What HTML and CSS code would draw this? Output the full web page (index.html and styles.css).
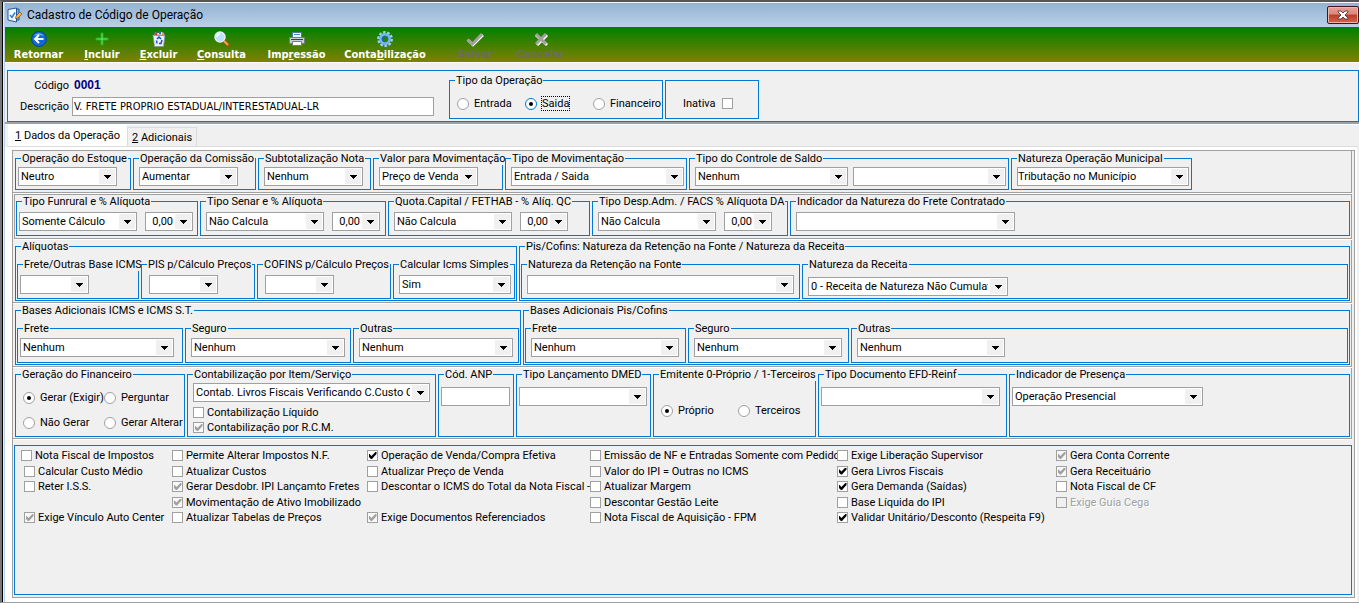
FILE: index.html
```html
<!DOCTYPE html>
<html lang="pt-BR">
<head>
<meta charset="utf-8">
<title>Cadastro de Código de Operação</title>
<link rel="stylesheet" href="styles.css">
</head>
<body>
<div class="window">
  <header class="titlebar">
    <svg class="app-icon" width="16" height="16" viewBox="0 0 16 16">
      <path d="M1 2.500 9.500 1v14L1 13z" fill="#f4f9ff" stroke="#24579a"/>
      <path d="M10 2h2v11h-2" fill="#7eb2ea" stroke="#24579a"/>
      <path d="M3 8l2 2.500L8 5.500" fill="none" stroke="#2f7fd4" stroke-width="1.500"/>
      <path d="M9 9l4-4 2 2-4 4-2.500.5z" fill="#f2b74d" stroke="#7a4c18" stroke-width=".7"/>
    </svg>
    <h1>Cadastro de Código de Operação</h1>
    <button class="close" type="button" aria-label="Fechar">
      <svg width="12" height="10" viewBox="0 0 12 10"><path d="M1 1h3l2 2 2-2h3v1L8 5l3 3v1H8L6 7 4 9H1V8l3-3-3-3z" fill="#fff" stroke="#4b3b4b" stroke-width=".9"/></svg>
    </button>
  </header>

  <nav class="toolbar">
    <button type="button">
      <svg width="16" height="16" viewBox="0 0 16 16"><circle cx="8" cy="8" r="7.500" fill="#1266d6" stroke="#0a3f9a"/><path d="M3 5a6 6 0 0 1 10 0c-3-1.500-7-1.500-10 0z" fill="#6eb0f8"/><path d="M8 4 4 8l4 4M4.500 8H12.500" fill="none" stroke="#fff" stroke-width="2"/></svg>
      <span>Retornar</span></button>
    <button type="button">
      <svg width="16" height="16" viewBox="0 0 16 16"><path d="M7 2h2v5h5v2H9v5H7V9H2V7h5z" fill="#5fe05a" stroke="#22b022" stroke-width="1"/></svg>
      <span><u>I</u>ncluir</span></button>
    <button type="button">
      <svg width="16" height="16" viewBox="0 0 16 16"><path d="M2 4h12l-1.500 11.500h-9z" fill="#edf1f8" stroke="#8993a8" stroke-width=".8"/><path d="M3 4l1-3 3 1 2-1.500 4 1L14 4z" fill="#fff" stroke="#444" stroke-width=".7"/><path d="M4 2h2v2H4z" fill="#d34"/><path d="M8 1h2v2H8z" fill="#27b"/><path d="M11 2h2v2h-2z" fill="#e9a526"/><path d="M6 8l2-2 2 2M11 9l-1 3.500H8M5.500 9.500 6 12.500" fill="none" stroke="#1d4fc4" stroke-width="1.500"/></svg>
      <span><u>E</u>xcluir</span></button>
    <button type="button">
      <svg width="16" height="16" viewBox="0 0 16 16"><path d="M10 10l4.500 4.500" stroke="#9a5217" stroke-width="3.500" stroke-linecap="round"/><path d="M10 10l4 4" stroke="#f4a747" stroke-width="2"/><circle cx="6" cy="6" r="5" fill="#b9e1fb" stroke="#e6edf5" stroke-width="1.500"/><path d="M3 6a3 3 0 0 1 3-3" fill="none" stroke="#fff" stroke-width="1.500"/></svg>
      <span><u>C</u>onsulta</span></button>
    <button type="button">
      <svg width="16" height="16" viewBox="0 0 16 16"><path d="M3.500 1.500h9v5h-9z" fill="#eaf3fd" stroke="#54779f"/><path d="M5 3.500h6" stroke="#4a90d9"/><path d="M.5 6.500h15v6H.500z" fill="#c9ced6" stroke="#747c88"/><path d="M2 8.500h12" stroke="#38404c"/><path d="M3.500 10.500h9v4h-9z" fill="#fff" stroke="#747c88"/></svg>
      <span>Imp<u>r</u>essão</span></button>
    <button type="button">
      <svg width="16" height="16" viewBox="0 0 16 16"><circle cx="8" cy="8" r="6.700" fill="none" stroke="#9bd2fa" stroke-width="2.400" stroke-dasharray="2.600 1.600"/><circle cx="8" cy="8" r="4.500" fill="none" stroke="#73b7f2" stroke-width="3"/><circle cx="8" cy="8" r="3" fill="none" stroke="#1e64b8"/></svg>
      <span>Conta<u>b</u>ilização</span></button>
    <button type="button" disabled>
      <svg width="18" height="16" viewBox="0 0 18 16"><path d="M2 9l5 5L17 4" fill="none" stroke="#fff" stroke-width="2.500"/><path d="M1.500 8.500 6.500 13 16 3" fill="none" stroke="#a0a0a0" stroke-width="3"/></svg>
      <span><u>S</u>alvar</span></button>
    <button type="button" disabled>
      <svg width="16" height="16" viewBox="0 0 16 16"><path d="M3 4l11 10M14 4 4 14" stroke="#fff" stroke-width="3"/><path d="M3 3l10 10M13 3 3 13" stroke="#a0a0a0" stroke-width="3"/></svg>
      <span>Cancelar</span></button>
  </nav>

  <main>
    <section class="record">
      <div class="identity">
        <span>Código</span><output class="code">0001</output>
        <label for="descricao">Descrição</label>
        <input class="text" id="descricao" type="text" value="V. FRETE PROPRIO ESTADUAL/INTERESTADUAL-LR">
      </div>
      <fieldset class="kind">
        <legend>Tipo da Operação</legend>
        <label><input type="radio" name="tipo"><span>Entrada</span></label>
        <label><input class="active" type="radio" name="tipo" checked><span class="focused">Saida</span></label>
        <label><input type="radio" name="tipo"><span>Financeiro</span></label>
      </fieldset>
      <div class="inactive"><label for="inativa">Inativa</label><input id="inativa" type="checkbox"></div>
    </section>

    <div class="tabs" role="tablist">
      <button class="tab selected" type="button" role="tab" aria-selected="true"><u>1</u> Dados da Operação</button>
      <button class="tab" type="button" role="tab" aria-selected="false"><u>2</u> Adicionais</button>
    </div>

    <div class="page">
      <div class="sheet">
      <section class="row row-stock">
        <fieldset class="tight"><legend><label for="s1">Operação do Estoque</label></legend><span class="combo w99"><select id="s1"><option>Neutro</option></select></span></fieldset>
        <fieldset><legend><label for="s2">Operação da Comissão</label></legend><span class="combo w99"><select id="s2"><option>Aumentar</option></select></span></fieldset>
        <fieldset><legend><label for="s3">Subtotalização Nota</label></legend><span class="combo w99"><select id="s3"><option>Nenhum</option></select></span></fieldset>
        <fieldset><legend><label for="s4">Valor para Movimentação</label></legend><span class="combo w99"><select id="s4"><option>Preço de Venda</option></select></span></fieldset>
        <fieldset><legend><label for="s5">Tipo de Movimentação</label></legend><span class="combo fill"><select id="s5"><option>Entrada / Saida</option></select></span></fieldset>
        <fieldset><legend><label for="s6">Tipo do Controle de Saldo</label></legend><span class="combo fill"><select id="s6"><option>Nenhum</option></select></span><span class="combo fill"><select aria-label="Saldo complementar"><option></option></select></span></fieldset>
        <fieldset><legend><label for="s7">Natureza Operação Municipal</label></legend><span class="combo fill"><select class="ui" id="s7"><option>Tributação no Município</option></select></span></fieldset>
      </section>

      <section class="row row-rates">
        <fieldset class="tight"><legend><label for="r1">Tipo Funrural e % Alíquota</label></legend><span class="combo w118"><select id="r1"><option>Somente Cálculo</option></select></span><span class="combo num"><select aria-label="Alíquota Funrural"><option>0,00</option></select></span></fieldset>
        <fieldset><legend><label for="r2">Tipo Senar e % Alíquota</label></legend><span class="combo w118"><select id="r2"><option>Não Calcula</option></select></span><span class="combo num"><select aria-label="Alíquota Senar"><option>0,00</option></select></span></fieldset>
        <fieldset><legend><label for="r3">Quota.Capital / FETHAB - % Alíq. QC</label></legend><span class="combo w118"><select id="r3"><option>Não Calcula</option></select></span><span class="combo num"><select aria-label="Alíquota QC"><option>0,00</option></select></span></fieldset>
        <fieldset><legend><label for="r4">Tipo Desp.Adm. / FACS % Alíquota DA</label></legend><span class="combo w118"><select id="r4"><option>Não Calcula</option></select></span><span class="combo num"><select aria-label="Alíquota DA"><option>0,00</option></select></span></fieldset>
        <fieldset><legend><label for="r5">Indicador da Natureza do Frete Contratado</label></legend><span class="combo w219"><select id="r5"><option></option></select></span></fieldset>
      </section>

      <section class="row row-aliq">
        <fieldset class="outer four"><legend>Alíquotas</legend>
          <fieldset class="tight"><legend><label for="a1">Frete/Outras Base ICMS</label></legend><span class="combo w69"><select id="a1"><option></option></select></span></fieldset>
          <fieldset><legend><label for="a2">PIS p/Cálculo Preços</label></legend><span class="combo w69"><select id="a2"><option></option></select></span></fieldset>
          <fieldset><legend><label for="a3">COFINS p/Cálculo Preços</label></legend><span class="combo w69"><select id="a3"><option></option></select></span></fieldset>
          <fieldset><legend><label for="a4">Calcular Icms Simples</label></legend><span class="combo fill"><select id="a4"><option>Sim</option></select></span></fieldset>
        </fieldset>
        <fieldset class="outer two"><legend>Pis/Cofins: Natureza da Retenção na Fonte / Natureza da Receita</legend>
          <fieldset><legend><label for="a5">Natureza da Retenção na Fonte</label></legend><span class="combo w267"><select id="a5"><option></option></select></span></fieldset>
          <fieldset class="receita"><legend><label for="a6">Natureza da Receita</label></legend><span class="combo w200"><select id="a6"><option>0 - Receita de Natureza Não Cumulativa</option></select></span></fieldset>
        </fieldset>
      </section>

      <section class="row row-bases">
        <fieldset class="outer thirds"><legend>Bases Adicionais ICMS e ICMS S.T.</legend>
          <fieldset class="tight"><legend><label for="b1">Frete</label></legend><span class="combo w154"><select id="b1"><option>Nenhum</option></select></span></fieldset>
          <fieldset><legend><label for="b2">Seguro</label></legend><span class="combo w154"><select id="b2"><option>Nenhum</option></select></span></fieldset>
          <fieldset><legend><label for="b3">Outras</label></legend><span class="combo w154"><select id="b3"><option>Nenhum</option></select></span></fieldset>
        </fieldset>
        <fieldset class="outer pis"><legend>Bases Adicionais Pis/Cofins</legend>
          <fieldset><legend><label for="b4">Frete</label></legend><span class="combo w148"><select id="b4"><option>Nenhum</option></select></span></fieldset>
          <fieldset><legend><label for="b5">Seguro</label></legend><span class="combo w148"><select id="b5"><option>Nenhum</option></select></span></fieldset>
          <fieldset><legend><label for="b6">Outras</label></legend><span class="combo w148"><select id="b6"><option>Nenhum</option></select></span></fieldset>
        </fieldset>
      </section>

      <section class="row row-fin">
        <fieldset class="radios"><legend>Geração do Financeiro</legend>
          <label><input type="radio" name="ger" checked><span>Gerar (Exigir)</span></label>
          <label><input type="radio" name="ger"><span>Perguntar</span></label>
          <label><input type="radio" name="ger"><span>Não Gerar</span></label>
          <label><input type="radio" name="ger"><span>Gerar Alterar</span></label>
        </fieldset>
        <fieldset class="ledger"><legend><label for="f1">Contabilização por Item/Serviço</label></legend>
          <span class="combo"><select id="f1"><option>Contab. Livros Fiscais Verificando C.Custo Contábil</option></select></span>
          <label class="check"><input type="checkbox">Contabilização Líquido</label>
          <label class="check"><input class="gray" type="checkbox" checked>Contabilização por R.C.M.</label>
        </fieldset>
        <fieldset class="low tight"><legend><label for="f2">Cód. ANP</label></legend><input class="text" id="f2" type="text"></fieldset>
        <fieldset class="low tight"><legend><label for="f3">Tipo Lançamento DMED</label></legend><span class="combo fill"><select id="f3"><option></option></select></span></fieldset>
        <fieldset class="issuer"><legend>Emitente 0-Próprio / 1-Terceiros</legend>
          <label><input type="radio" name="emi" checked><span>Próprio</span></label>
          <label><input type="radio" name="emi"><span>Terceiros</span></label>
        </fieldset>
        <fieldset class="low tight"><legend><label for="f4">Tipo Documento EFD-Reinf</label></legend><span class="combo w179"><select id="f4"><option></option></select></span></fieldset>
        <fieldset class="low tight"><legend><label for="f5">Indicador de Presença</label></legend><span class="combo w191"><select id="f5"><option>Operação Presencial</option></select></span></fieldset>
      </section>

      <section class="options">
        <label class="check c1 first"><input type="checkbox">Nota Fiscal de Impostos</label>
        <label class="check c2"><input type="checkbox">Permite Alterar Impostos N.F.</label>
        <label class="check c3"><input type="checkbox" checked>Operação de Venda/Compra Efetiva</label>
        <label class="check c4"><input type="checkbox">Emissão de NF e Entradas Somente com Pedido</label>
        <label class="check c5"><input type="checkbox">Exige Liberação Supervisor</label>
        <label class="check c6"><input class="gray" type="checkbox" checked>Gera Conta Corrente</label>

        <label class="check c1"><input type="checkbox">Calcular Custo Médio</label>
        <label class="check c2"><input type="checkbox">Atualizar Custos</label>
        <label class="check c3"><input type="checkbox">Atualizar Preço de Venda</label>
        <label class="check c4"><input type="checkbox">Valor do IPI = Outras no ICMS</label>
        <label class="check c5"><input type="checkbox" checked>Gera Livros Fiscais</label>
        <label class="check c6"><input class="gray" type="checkbox" checked>Gera Receituário</label>

        <label class="check c1"><input type="checkbox">Reter I.S.S.</label>
        <label class="check c2"><input class="gray" type="checkbox" checked>Gerar Desdobr. IPI Lançamto Fretes</label>
        <label class="check c3"><input type="checkbox">Descontar o ICMS do Total da Nota Fiscal -</label>
        <label class="check c4"><input type="checkbox">Atualizar Margem</label>
        <label class="check c5"><input type="checkbox" checked>Gera Demanda (Saídas)</label>
        <label class="check c6"><input type="checkbox">Nota Fiscal de CF</label>

        <label class="check c2"><input class="gray" type="checkbox" checked>Movimentação de Ativo Imobilizado</label>
        <label class="check c4"><input type="checkbox">Descontar Gestão Leite</label>
        <label class="check c5"><input type="checkbox">Base Líquida do IPI</label>
        <label class="check c6 off"><input type="checkbox" disabled>Exige Guia Cega</label>

        <label class="check c1"><input class="gray" type="checkbox" checked>Exige Vínculo Auto Center</label>
        <label class="check c2"><input type="checkbox">Atualizar Tabelas de Preços</label>
        <label class="check c3"><input class="gray" type="checkbox" checked>Exige Documentos Referenciados</label>
        <label class="check c4"><input type="checkbox">Nota Fiscal de Aquisição - FPM</label>
        <label class="check c5"><input type="checkbox" checked>Validar Unitário/Desconto (Respeita F9)</label>
      </section>
      </div>
    </div>
  </main>
</div>
</body>
</html>
```
FILE: styles.css
```css
:root {
  --face: #f0f0f0;
  --blue: #0078d7;
  --gray: #a0a0a0;
  --ui: "DejaVu Sans Condensed", "Noto Sans", sans-serif;
  --plain: Roboto, "Liberation Sans", sans-serif;
}

* { box-sizing: border-box; }

body {
  margin: 0;
  background: var(--face);
  color: #000;
  font: 11px/13px var(--plain);
}

input, select, button { font: inherit; color: inherit; margin: 0; }

.window {
  min-height: 100vh;
  display: flex;
  flex-direction: column;
  border-top: 2px solid #555;
  border-left: 2px solid #777;
  border-bottom: 1px solid var(--gray);
  box-shadow: inset 1px 0 #000, inset 2px 0 #e4eefa, inset 3px 0 #b9d1ea;
  padding-left: 3px;
}

/* Title bar */
.titlebar {
  display: flex;
  align-items: center;
  height: 25px;
  padding: 0 0 0 2px;
  gap: 4px;
  border-top: 1px solid #f4f8fc;
  background: linear-gradient(#94b2d0, #b9d1ea);
}
.titlebar h1 {
  flex: 1;
  margin: 0;
  font: 12px/16px Roboto, "Noto Sans", sans-serif;
}
.close {
  display: flex;
  align-items: center;
  justify-content: center;
  width: 32px;
  height: 18px;
  padding: 0;
  border: 1px solid #43141c;
  border-radius: 2px;
  background: linear-gradient(#e8a196, #dc8578 45%, #bd3a24 50%, #d2694f);
  box-shadow: inset 0 0 0 1px #eeb5a9;
}

/* Toolbar */
.toolbar {
  display: grid;
  grid-template-columns: 67px 60px 53px 73px 77px 100px 80px 51px;
  height: 36px;
  border-bottom: 1px solid #fff;
  background: linear-gradient(#008000, #808000);
}
.toolbar button {
  display: flex;
  flex-direction: column;
  align-items: center;
  padding: 4px 0 0;
  border: 0;
  background: none;
  color: #fff;
  font: bold 11px/15px var(--ui);
  white-space: nowrap;
}
.toolbar button:disabled { color: #6d6d5c; }

/* Controls */
fieldset {
  display: flex;
  align-items: flex-start;
  min-width: 0;
  margin: 0;
  padding: var(--pt, 2px) 3px var(--pb, 3px) 5px;
  border: 1px solid var(--blue);
}
legend {
  margin-left: 0;
  padding: 0 1px;
  line-height: 13px;
  white-space: nowrap;
}
.tight { padding-left: 2px; }
.tight > legend { margin-left: 3px; }

.combo {
  display: grid;
  grid-template-columns: minmax(0, 1fr);
  height: 19px;
}
.combo select {
  grid-area: 1 / 1;
  appearance: none;
  min-width: 0;
  padding: 0 19px 1px 2px;
  border: 1px solid var(--gray);
  border-radius: 0;
  background: #fff;
  outline: 0;
  overflow: hidden;
  white-space: nowrap;
}
.combo::after {
  content: "";
  grid-area: 1 / 1;
  justify-self: end;
  align-self: center;
  width: 16px;
  height: 15px;
  margin-right: 2px;
  pointer-events: none;
  background:
    linear-gradient(#000, #000) 5px 6px / 7px 1px no-repeat,
    linear-gradient(#000, #000) 6px 7px / 5px 1px no-repeat,
    linear-gradient(#000, #000) 7px 8px / 3px 1px no-repeat,
    linear-gradient(#000, #000) 8px 9px / 1px 1px no-repeat,
    var(--face);
}
.combo select.ui { padding-left: 0; }
.w69 { width: 69px; }
.w99 { width: 99px; }
.w118 { width: 118px; }
.w148 { width: 148px; }
.w154 { width: 154px; }
.w179 { width: 179px; }
.w191 { width: 191px; }
.w200 { width: 200px; }
.w219 { width: 219px; }
.w267 { width: 267px; }
.fill { flex: 1; }
.num { width: 48px; margin-left: 8px; }
.num select { text-align-last: right; }

.text {
  width: 100%;
  height: 19px;
  padding: 0 1px;
  border: 1px solid var(--gray);
  background: #fff;
}

input[type="checkbox"], input[type="radio"] {
  appearance: none;
  flex: none;
  display: grid;
  place-content: center;
  width: 11px;
  height: 11px;
  border: 1px solid var(--gray);
  background: #fff;
}
input[type="checkbox"]:checked::before {
  content: "";
  width: 8px;
  height: 7px;
  background: #000;
  clip-path: polygon(0 30%, 14% 30%, 36% 58%, 86% 0, 100% 0, 100% 30%, 44% 100%, 30% 100%, 0 66%);
}
input[type="checkbox"].gray { background: #f8f8f8; }
input[type="checkbox"].gray::before { background: var(--gray); }
input[type="checkbox"]:disabled { background: var(--face); }
input[type="radio"] {
  width: 12px;
  height: 12px;
  border-radius: 50%;
}
input[type="radio"]:checked::before {
  content: "";
  width: 4px;
  height: 4px;
  border-radius: 50%;
  background: #000;
}
input[type="radio"].active { border-color: var(--blue); }

.check {
  display: flex;
  align-items: center;
  gap: 3px;
  white-space: nowrap;
}

/* Record header */
main {
  flex: 1;
  display: flex;
  flex-direction: column;
}
.record {
  display: flex;
  gap: 2px;
  margin: 7px 0 0 2px;
  padding-bottom: 2px;
  border: 1px solid var(--blue);
}
.identity {
  display: grid;
  grid-template-columns: 61px 362px;
  grid-template-rows: 13px 19px;
  gap: 5px 3px;
  align-content: start;
  align-items: center;
  width: 439px;
  padding-top: 8px;
}
.identity > :nth-child(odd) { text-align: right; }
.identity .text { font-family: var(--ui); }
.code {
  padding-left: 2px;
  color: #000080;
  font: bold 12px/13px "Liberation Sans", sans-serif;
}
.kind {
  width: 214px;
  height: 45px;
  margin-top: 3px;
  padding: 10px 0 0 7px;
  align-items: center;
}
.kind label, .radios label, .issuer label {
  display: flex;
  align-items: center;
  gap: 5px;
  white-space: nowrap;
}
.kind { display: grid; grid-template-columns: 68px 68px auto; align-content: start; }
.kind > legend { margin-left: -2px; }
.focused { outline: 1px dotted #000; }
.inactive {
  display: flex;
  align-items: center;
  gap: 6px;
  width: 94px;
  height: 39px;
  margin-top: 9px;
  padding: 8px 0 0 17px;
  border: 1px solid var(--blue);
}

/* Tabs */
.tabs {
  display: flex;
  align-items: flex-end;
  height: 24px;
  border-top: 2px solid var(--gray);
  box-shadow: inset 0 1px #fff;
  padding-left: 3px;
}
.tab {
  height: 19px;
  padding: 0 4px;
  border: 1px solid #dcdcdc;
  border-bottom: 0;
  background: var(--face);
}
.tab.selected {
  height: 21px;
  padding: 0 6px 2px;
  border-color: #fff;
  background: #fff;
}
.page {
  flex: 1;
  display: flex;
  padding: 3px 2px 4px 4px;
  border-top: 1px solid #dcdcdc;
  border-right: 2px solid var(--face);
  background: #fff;
  border-left: 3px solid #fff;
}
.sheet {
  flex: 1;
  min-width: 0;
  display: flex;
  flex-direction: column;
  padding: 0 2px 2px 0;
  border: 1px solid var(--gray);
  background: var(--face);
}

/* Rows of groups */
.row {
  display: grid;
  gap: 2px;
  margin-bottom: 1px;
  padding: 0 1px 1px 2px;
  border-bottom: 1px solid var(--gray);
  border-right: 1px solid var(--gray);
  box-shadow: 0 1px #fff;
}
.row-stock {
  grid-template-columns: 116px 123px 113px 130px 182px 320px 181px;
  padding: 1px 0 2px 2px;
}
.row-stock .fill + .fill { margin-left: 5px; }
.row-stock fieldset { padding-right: 2px; }
.row-rates {
  --pt: 4px;
  --pb: 4px;
  grid-template-columns: 182px 186px 202px 196px 1fr;
  padding: 0 1px 2px 2px;
  border-top: 1px solid var(--gray);
  border-left: 1px solid var(--gray);
  margin-left: 1px;
  padding-left: 1px;
}
.outer {
  display: grid;
  gap: 2px;
  padding: 5px 1px 1px;
  align-items: stretch;
}
.outer > legend { margin-left: 4px; }
.row-aliq {
  --pt: 4px;
  --pb: 4px;
  grid-template-columns: 502px 1fr;
}
.four { grid-template-columns: 122px 114px 134px 1fr; }
.four .w69 { margin-left: 2px; }
.four .tight .w69 { margin-left: 0; }
.two { grid-template-columns: 279px 1fr; }
.receita { --pt: 6px; --pb: 2px; }
.row-bases {
  --pt: 3px;
  --pb: 5px;
  grid-template-columns: 506px 1fr;
}
.thirds { grid-template-columns: 1fr 1fr 1fr; }
.pis { grid-template-columns: 161px 161px 1fr; }
.row-fin {
  --pb: 1px;
  grid-template-columns: 170px 249px 76px 135px 163px 189px 1fr;
}
.radios {
  display: grid;
  grid-template-columns: 81px 1fr;
  grid-template-rows: 25px 25px;
  padding: 4px 0 0 7px;
  align-items: center;
}
.radios > legend { margin-left: -2px; }
.ledger {
  display: flex;
  flex-direction: column;
  align-items: stretch;
  padding-right: 5px;
}
.ledger .check { height: 15px; }
.ledger .combo { margin-bottom: 3px; }
.low { --pt: 6px; }
.issuer {
  display: grid;
  grid-template-columns: 77px auto;
  align-content: start;
  padding: 23px 0 0 7px;
}
.issuer > legend { margin-left: -2px; }

/* Option boxes */
.options {
  flex: 1;
  display: grid;
  grid-template-columns: 148px 195px 223px 247px 219px auto;
  grid-template-rows: 15px 16px 15px 16px 15px;
  align-content: start;
  justify-content: start;
  margin: 5px 0 0 1px;
  padding: 2px 0 0 9px;
  border: 1px solid var(--blue);
}
.c1 { grid-column: 1; }
.c2 { grid-column: 2; }
.c3 { grid-column: 3; }
.c4 { grid-column: 4; }
.c5 { grid-column: 5; }
.c6 { grid-column: 6; }
.first { margin-left: -3px; }
.off { color: var(--gray); text-shadow: 1px 1px #fff; }
```
